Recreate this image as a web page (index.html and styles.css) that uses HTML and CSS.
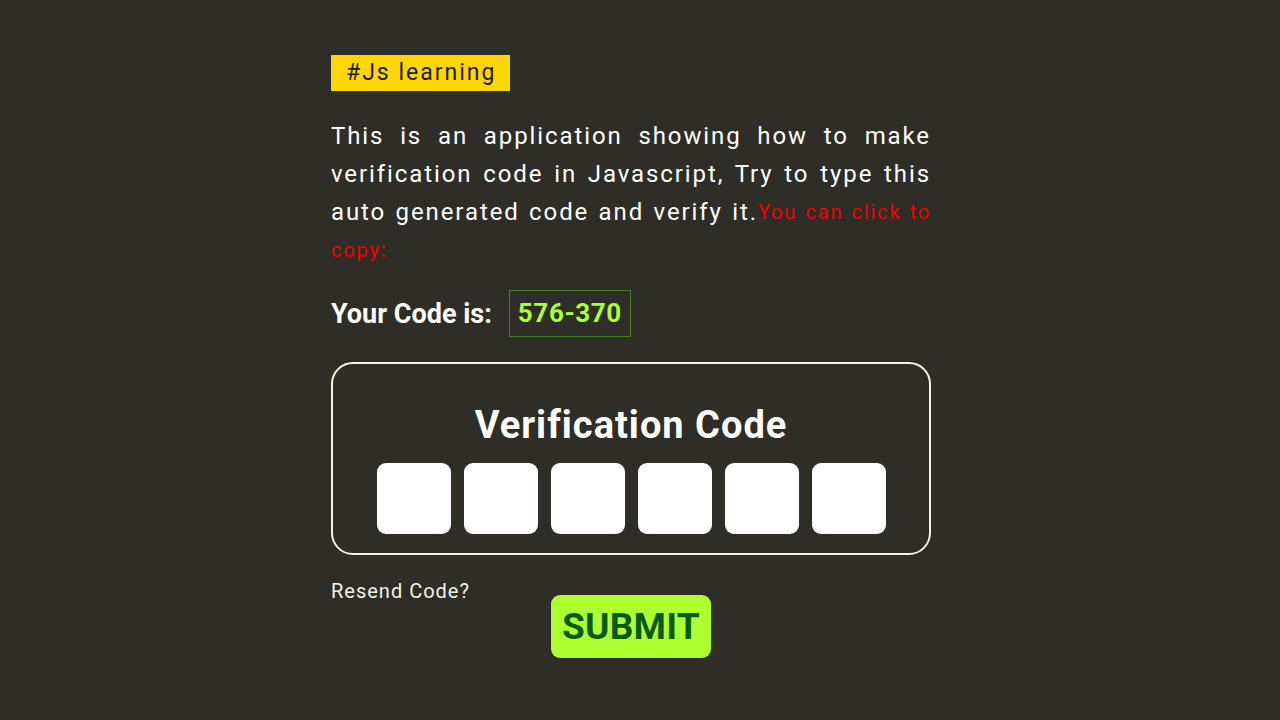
FILE: index.html
```html
<!DOCTYPE html>
<html lang="en">
<head>
<meta charset="utf-8">
<title>Verification Code</title>
<link rel="stylesheet" href="styles.css">
</head>
<body>
<main class="wrap">
  <span class="tag">#Js learning</span>
  <p class="intro">This is an application showing how to make verification code in Javascript, Try to type this auto generated code and verify it.<span class="hint">You can click to copy:</span></p>
  <div class="code-row">
    <span class="code-label">Your Code is:</span>
    <span class="code">576-370</span>
  </div>
  <section class="verify">
    <h1 class="verify-title">Verification Code</h1>
    <div class="digits">
      <input class="digit" type="text" maxlength="1">
      <input class="digit" type="text" maxlength="1">
      <input class="digit" type="text" maxlength="1">
      <input class="digit" type="text" maxlength="1">
      <input class="digit" type="text" maxlength="1">
      <input class="digit" type="text" maxlength="1">
    </div>
  </section>
  <div class="actions">
    <span class="resend">Resend Code?</span>
    <button class="submit" type="button">SUBMIT</button>
  </div>
</main>
</body>
</html>
```
FILE: styles.css
```css
* { box-sizing: border-box; }
html, body { margin: 0; height: 100%; }
body {
  background: #2e2d27;
  font-family: Roboto, "Noto Sans", Arial, sans-serif;
  color: #ffffff;
  padding-right: 18px;
}
.wrap {
  width: 600px;
  margin: 0 auto;
  padding: 55px 0 0;
  display: flex;
  flex-direction: column;
  align-items: flex-start;
}
.tag {
  background: #ffd700;
  color: #1d1a10;
  font-size: 23px;
  line-height: 36px;
  padding: 0 14px 0 15px;
  letter-spacing: 2px;
}
.intro {
  margin: 26px 0 0;
  font-size: 24px;
  line-height: 38px;
  text-align: justify;
  letter-spacing: 1.9px;
  width: 100%;
}
.hint {
  color: #f00000;
  font-size: 20px;
  font-weight: 400;
  letter-spacing: 1.8px;
  vertical-align: 1px;
}
.code-row {
  margin-top: 21px;
  display: flex;
  align-items: center;
  gap: 17px;
}
.code-label {
  font-size: 27px;
  font-weight: 700;
}
.code {
  font-size: 26px;
  font-weight: 700;
  color: #adff2f;
  border: 1px solid #4b7a1e;
  line-height: 45px;
  padding: 0 8px;
  letter-spacing: 0.6px;
}
.verify {
  margin-top: 25px;
  width: 100%;
  border: 2px solid #f5f5dc;
  border-radius: 22px;
  padding: 38px 0 19px;
  display: flex;
  flex-direction: column;
  align-items: center;
}
.verify-title {
  margin: 0;
  font-size: 38px;
  line-height: 46px;
  font-weight: 700;
  letter-spacing: 1px;
}
.digits {
  margin-top: 15px;
  display: flex;
  gap: 13px;
}
.digit {
  width: 74px;
  height: 71px;
  border: none;
  border-radius: 9px;
  background: #ffffff;
  margin: 0;
  padding: 0;
  outline: none;
}
.actions {
  width: 100%;
  margin-top: 24px;
  display: grid;
  grid-template-columns: 1fr auto 1fr;
  align-items: start;
}
.resend {
  font-size: 20px;
  line-height: 24px;
  letter-spacing: 1px;
  color: #f2f2ea;
}
.submit {
  margin-top: 16px;
  background: #adff2f;
  color: #0b5a12;
  border: none;
  border-radius: 9px;
  font-family: Roboto, "Noto Sans", Arial, sans-serif;
  font-size: 37px;
  font-weight: 700;
  letter-spacing: 0.3px;
  height: 63px;
  padding: 0 11px;
}
```
